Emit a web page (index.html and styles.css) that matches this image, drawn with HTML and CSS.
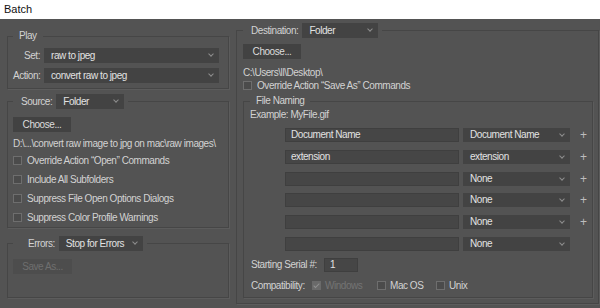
FILE: index.html
```html
<!DOCTYPE html>
<html lang="en">
<head>
  <meta charset="UTF-8">
  <title>Batch</title>
  <link rel="stylesheet" href="styles.css">
</head>
<body>

  <!-- Window title -->
  <div class="titlebar">Batch</div>

  <div class="dialog">

    <!-- Left column: play / source / errors -->
    <div class="col col-left">
      <fieldset class="group group-play">
        <legend class="legend-text">Play</legend>
        <div class="form-row">
          <span class="lbl lbl-play">Set:</span>
          <div class="select select-play">raw to jpeg</div>
        </div>
        <div class="form-row">
          <span class="lbl lbl-play">Action:</span>
          <div class="select select-play">convert raw to jpeg</div>
        </div>
      </fieldset>

      <fieldset class="group group-source">
        <legend class="legend-ctrl legend-source">
          <span class="lbl">Source:</span>
          <div class="select select-source">Folder</div>
        </legend>
        <button class="btn">Choose...</button>
        <div class="path">D:\...\convert raw image to jpg on mac\raw images\</div>
        <div class="check-list">
          <label class="check"><span class="box"></span>Override Action “Open” Commands</label>
          <label class="check"><span class="box"></span>Include All Subfolders</label>
          <label class="check"><span class="box"></span>Suppress File Open Options Dialogs</label>
          <label class="check"><span class="box"></span>Suppress Color Profile Warnings</label>
        </div>
      </fieldset>

      <fieldset class="group group-errors">
        <legend class="legend-ctrl legend-errors">
          <span class="lbl">Errors:</span>
          <div class="select select-errors">Stop for Errors</div>
        </legend>
        <button class="btn btn-disabled">Save As...</button>
      </fieldset>
    </div>

    <!-- Right column: destination -->
    <div class="col col-right">
      <fieldset class="group group-dest">
        <legend class="legend-ctrl legend-dest">
          <span class="lbl">Destination:</span>
          <div class="select select-dest">Folder</div>
        </legend>
        <button class="btn">Choose...</button>
        <div class="path path-dest">C:\Users\ll\Desktop\</div>
        <label class="check check-tight"><span class="box"></span>Override Action “Save As” Commands</label>

        <fieldset class="group group-naming">
          <legend class="legend-text">File Naming</legend>
          <div class="example">Example: MyFile.gif</div>

          <div class="naming-rows">
            <div class="naming-row">
              <div class="field">Document Name</div>
              <div class="select select-naming">Document Name</div>
              <span class="plus">+</span>
            </div>
            <div class="naming-row">
              <div class="field">extension</div>
              <div class="select select-naming">extension</div>
              <span class="plus">+</span>
            </div>
            <div class="naming-row">
              <div class="field"></div>
              <div class="select select-naming">None</div>
              <span class="plus">+</span>
            </div>
            <div class="naming-row">
              <div class="field"></div>
              <div class="select select-naming">None</div>
              <span class="plus">+</span>
            </div>
            <div class="naming-row">
              <div class="field"></div>
              <div class="select select-naming">None</div>
              <span class="plus">+</span>
            </div>
            <div class="naming-row">
              <div class="field"></div>
              <div class="select select-naming">None</div>
              <span class="plus"></span>
            </div>
          </div>

          <div class="serial-row">
            <span class="lbl lbl-serial">Starting Serial #:</span>
            <div class="field field-serial">1</div>
          </div>

          <div class="compat-row">
            <span class="lbl lbl-compat">Compatibility:</span>
            <label class="check check-inline check-win disabled"><span class="box box-checked"></span>Windows</label>
            <label class="check check-inline check-mac"><span class="box"></span>Mac OS</label>
            <label class="check check-inline"><span class="box"></span>Unix</label>
          </div>
        </fieldset>
      </fieldset>
    </div>

  </div>

</body>
</html>
```

FILE: styles.css
```css
/* Base styles */
* {
  margin: 0;
  padding: 0;
  box-sizing: border-box;
}

body {
  font-family: 'Liberation Sans', Arial, sans-serif;
  font-size: 10px;
  letter-spacing: -0.45px;
  background-color: #535353;
  color: #d2d2d2;
  width: 600px;
  height: 308px;
  overflow: hidden;
}

/* Title bar */
.titlebar {
  height: 19px;
  line-height: 18px;
  padding-left: 4px;
  background-color: #ffffff;
  color: #111;
  font-size: 11px;
  letter-spacing: 0;
}

.dialog {
  display: flex;
}

.col-left {
  width: 236px;
  padding: 10px 7px 0 7px;
}

.col-right {
  width: 364px;
  padding-top: 4px;
}

/* Group boxes */
.group {
  border: 1px solid #464646;
  box-shadow: 1px 1px 0 #5c5c5c;
  min-width: 0;
}

.legend-text {
  height: 14px;
  line-height: 14px;
  padding: 0 6px;
}

.legend-ctrl {
  display: flex;
  align-items: center;
  gap: 4px;
  height: 15px;
}

.lbl {
  white-space: nowrap;
  flex-shrink: 0;
}

/* Select boxes */
.select {
  position: relative;
  flex-shrink: 0;
  height: 15px;
  line-height: 15px;
  padding-left: 7px;
  background-color: #434343;
  color: #e2e2e2;
  white-space: nowrap;
}

.select::after {
  content: '';
  position: absolute;
  right: 6px;
  top: 4px;
  width: 3px;
  height: 3px;
  border-right: 1px solid #8e8e8e;
  border-bottom: 1px solid #8e8e8e;
  transform: rotate(45deg);
}

/* Play */
.group-play {
  padding: 5px 9px 5px 5px;
}

.form-row {
  display: flex;
  align-items: center;
  gap: 4px;
}

.form-row + .form-row {
  margin-top: 5px;
}

.lbl-play {
  width: 27px;
  text-align: right;
}

.select-play {
  width: 175px;
}

/* Source */
.group-source {
  margin-top: 5px;
  padding: 8px 5px 0 5px;
}

.legend-source {
  padding-left: 8px;
  padding-right: 4px;
}

.select-source {
  width: 68px;
}

.btn {
  display: block;
  width: 58px;
  height: 15px;
  border: none;
  background-color: #424242;
  color: #dcdcdc;
  font-family: inherit;
  font-size: 10px;
  letter-spacing: inherit;
}

.btn-disabled {
  width: 59px;
  background-color: #4d4d4d;
  color: #6f6f6f;
}

.path {
  margin-top: 5px;
  line-height: 14px;
  white-space: nowrap;
}

.check {
  display: flex;
  align-items: center;
  gap: 5px;
  height: 19px;
  white-space: nowrap;
}

.box {
  width: 9px;
  height: 9px;
  border: 1px solid #6e6e6e;
  background-color: #4b4b4b;
  flex-shrink: 0;
}

/* Errors */
.group-errors {
  margin-top: 8px;
  padding: 8px 5px 23px 5px;
}

.legend-errors {
  padding-left: 15px;
  padding-right: 4px;
}

.select-errors {
  width: 84px;
}

/* Destination */
.group-dest {
  width: 363px;
  height: 281px;
  padding: 6px 5px 0 6px;
}

.legend-dest {
  padding-left: 8px;
  padding-right: 4px;
}

.select-dest {
  width: 76px;
}

.path-dest {
  margin-top: 7px;
  line-height: 13px;
}

.check-tight {
  height: 13px;
}

/* File naming */
.group-naming {
  margin-top: 2px;
  padding: 0 5px 4px 6px;
}

.example {
  line-height: 14px;
}

.naming-rows {
  display: flex;
  flex-direction: column;
  gap: 7.8px;
  margin-top: 6px;
  margin-left: 35px;
}

.naming-row {
  display: flex;
  align-items: center;
  gap: 4px;
}

.field {
  width: 174px;
  height: 14px;
  line-height: 12px;
  padding-left: 5px;
  background-color: #464646;
  border: 1px solid #3f3f3f;
  color: #e2e2e2;
  flex-shrink: 0;
}

.select-naming {
  width: 107px;
  height: 14px;
  line-height: 14px;
}

.plus {
  width: 8px;
  margin-left: 6px;
  color: #bdbdbd;
  font-size: 12px;
  line-height: 14px;
}

.serial-row,
.compat-row {
  display: flex;
  align-items: center;
  height: 14px;
  margin-top: 7px;
  margin-left: 1px;
}

.lbl-serial {
  width: 73px;
}

.field-serial {
  width: 34px;
}

.lbl-compat {
  width: 61px;
}

.check-inline {
  height: 14px;
  gap: 4px;
}

.check-win {
  width: 65px;
}

.check-mac {
  width: 59px;
}

.disabled {
  color: #737373;
}

.box-checked {
  position: relative;
  background-color: #6a6a6a;
  border-color: #6a6a6a;
}

.box-checked::after {
  content: '';
  position: absolute;
  left: 2px;
  top: 0;
  width: 2px;
  height: 5px;
  border-right: 1px solid #8f8f8f;
  border-bottom: 1px solid #8f8f8f;
  transform: rotate(45deg);
}
```
